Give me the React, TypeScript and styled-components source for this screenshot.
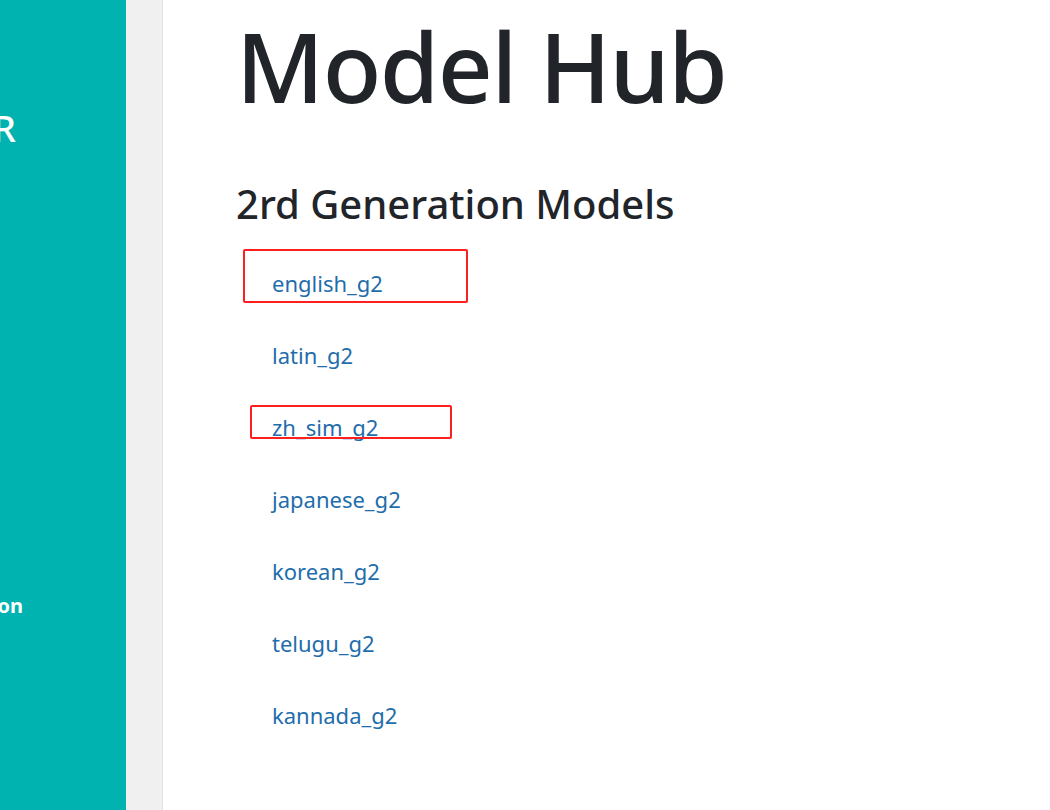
import React from "react";
import styled, { createGlobalStyle } from "styled-components";

const Global = createGlobalStyle`
  html, body { margin: 0; padding: 0; height: 100%; overflow: hidden; }
  body { font-family: "Noto Sans", "Open Sans", sans-serif; background: #ffffff; }
  #root { height: 100%; }
`;

const Page = styled.div`
  display: flex;
  height: 810px;
  width: 1050px;
`;

const Sidebar = styled.aside`
  width: 126px;
  flex: 0 0 126px;
  background: #00b3b0;
  overflow: hidden;
  display: flex;
  flex-direction: column;
  align-items: flex-start;
`;

const SideStack = styled.div`
  width: 0;
  display: flex;
  flex-direction: column;
  align-items: flex-end;
`;

const Brand = styled.div`
  color: #ffffff;
  font-size: 37px;
  font-weight: 500;
  line-height: 44px;
  white-space: nowrap;
  margin-top: 106px;
  margin-right: -16px;
`;

const NavLink = styled.div`
  color: #ffffff;
  font-weight: 700;
  font-size: 20px;
  line-height: 28px;
  white-space: nowrap;
  margin-top: 442px;
  margin-right: -23px;
`;

const Gutter = styled.div`
  width: 36px;
  flex: 0 0 36px;
  background: #f0f0f0;
  border-right: 1px solid #e2e2e2;
`;

const Main = styled.main`
  flex: 1;
  padding: 8px 0 0 73px;
  color: #212529;
`;

const Title = styled.h1`
  margin: 0;
  font-size: 96px;
  font-weight: 500;
  line-height: 1.2;
  letter-spacing: -1.5px;
`;

const Subtitle = styled.h2`
  margin: 57px 0 0;
  font-size: 40px;
  font-weight: 500;
  line-height: 1.2;
`;

const List = styled.ul`
  list-style: none;
  margin: 19px 0 0;
  padding: 0;
`;

const Item = styled.li`
  position: relative;
  padding: 20px 0 20px 36px;
  line-height: 32px;
  font-size: 22px;
`;

const Link = styled.a`
  color: #1f6dab;
  text-decoration: none;
`;

const Mark = styled.span<{ $l: number; $t: number; $w: number; $h: number }>`
  position: absolute;
  left: ${(p) => p.$l}px;
  top: ${(p) => p.$t}px;
  width: ${(p) => p.$w}px;
  height: ${(p) => p.$h}px;
  box-sizing: border-box;
  border: 2.5px solid #ff1f1f;
  border-radius: 2px;
  pointer-events: none;
`;

const models: { name: string; mark?: [number, number, number, number] }[] = [
  { name: "english_g2", mark: [7, 2, 225, 54] },
  { name: "latin_g2" },
  { name: "zh_sim_g2", mark: [14, 14, 202, 34] },
  { name: "japanese_g2" },
  { name: "korean_g2" },
  { name: "telugu_g2" },
  { name: "kannada_g2" },
];

export default function App() {
  return (
    <>
      <Global />
      <Page>
        <Sidebar>
          <SideStack>
            <Brand>EasyOCR</Brand>
            <NavLink>Installation</NavLink>
          </SideStack>
        </Sidebar>
        <Gutter />
        <Main>
          <Title>Model Hub</Title>
          <Subtitle>2rd Generation Models</Subtitle>
          <List>
            {models.map((m) => (
              <Item key={m.name}>
                <Link href="#">{m.name}</Link>
                {m.mark && <Mark $l={m.mark[0]} $t={m.mark[1]} $w={m.mark[2]} $h={m.mark[3]} />}
              </Item>
            ))}
          </List>
        </Main>
      </Page>
    </>
  );
}
